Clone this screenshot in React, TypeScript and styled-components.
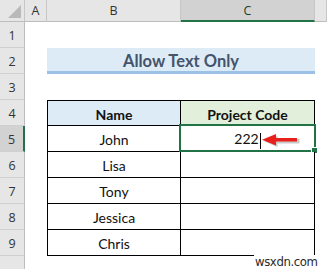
import React from "react";
import styled, {createGlobalStyle} from "styled-components";

const Global = createGlobalStyle`
  html, body {
    margin: 0;
    padding: 0;
    background: #ffffff;
  }
  body {
    font-family: "Lato", "Open Sans", sans-serif;
  }
`

const Sheet = styled.div`
  position: relative;
  width: 327px;
  height: 269px;
  overflow: hidden;
  display: grid;
  grid-template-columns: 25px 22px 134px 134px 12px;
  grid-template-rows: 22px repeat(10, 26px);
  background: #ffffff;
`

const Corner = styled.div`
  position: relative;
  background: #e6e6e6;
  border-right: 1px solid #c6c6c6;
  border-bottom: 1px solid #bdbdbd;
  box-sizing: border-box;

  &::after {
    content: "";
    position: absolute;
    right: 3px;
    bottom: 3px;
    width: 0;
    height: 0;
    border-left: 13px solid transparent;
    border-bottom: 13px solid #b9b9b9;
  }
`

const ColHead = styled.div<{ $active?: boolean }>`
  display: flex;
  align-items: center;
  justify-content: center;
  box-sizing: border-box;
  background: ${p => p.$active ? "#d2d2d2" : "#e6e6e6"};
  border-right: 1px solid #c6c6c6;
  border-bottom: ${p => p.$active ? "2px solid #217346" : "1px solid #bdbdbd"};
  padding-top: ${p => p.$active ? "1px" : "0"};
  font-family: "Open Sans", "Noto Sans", sans-serif;
  font-size: 12.5px;
  color: ${p => p.$active ? "#1f3d2b" : "#333333"};
`

const RowHead = styled.div<{ $active?: boolean }>`
  grid-column: 1;
  display: flex;
  align-items: center;
  justify-content: center;
  box-sizing: border-box;
  background: ${p => p.$active ? "#d2d2d2" : "#e6e6e6"};
  border-right: ${p => p.$active ? "2px solid #217346" : "1px solid #bdbdbd"};
  border-bottom: 1px solid #d0d0d0;
  padding-top: 2px;
  font-family: "Open Sans", "Noto Sans", sans-serif;
  font-size: 12.5px;
  color: #333333;
`

const Title = styled.div`
  grid-column: 3 / 5;
  grid-row: 3;
  display: flex;
  align-items: center;
  justify-content: center;
  box-sizing: border-box;
  background: #ddebf7;
  border-bottom: 3px solid #9bc2e6;
  padding-top: 2px;
  font-family: "Lato", "Open Sans", sans-serif;
  font-weight: 700;
  font-size: 16.5px;
  color: #44546a;
`

const Table = styled.div`
  grid-column: 3 / 5;
  grid-row: 5 / 11;
  display: grid;
  grid-template-columns: 134px 134px;
  grid-auto-rows: 26px;
  margin-left: 0;
  box-sizing: border-box;
`

const Cell = styled.div<{ $head?: "blue" | "green"; $first?: boolean; $col: number }>`
  position: relative;
  display: flex;
  align-items: center;
  justify-content: center;
  box-sizing: border-box;
  background: ${p => p.$head === "blue" ? "#ddebf7" : p.$head === "green" ? "#e2efda" : "#ffffff"};
  border-right: 1px solid #000000;
  border-bottom: 1px solid #000000;
  border-left: ${p => p.$col === 0 ? "1px solid #000000" : "none"};
  border-top: ${p => p.$first ? "1px solid #000000" : "none"};
  padding-top: 2px;
  font-family: "Lato", "Open Sans", sans-serif;
  font-weight: ${p => p.$head ? 700 : 400};
  font-size: 14px;
  color: #111111;
`

const Selection = styled.div`
  position: absolute;
  left: -2px;
  top: -2px;
  right: -2px;
  bottom: -1px;
  border: 2px solid #217346;
  pointer-events: none;

  &::after {
    content: "";
    position: absolute;
    right: -4px;
    bottom: -4px;
    width: 5px;
    height: 5px;
    background: #217346;
    border: 1px solid #ffffff;
  }
`

const Caret = styled.span`
  display: inline-block;
  width: 1px;
  height: 16px;
  margin-left: 1px;
  background: #000000;
  vertical-align: middle;
`

const Arrow = styled.svg`
  position: absolute;
  left: 80px;
  top: 7px;
`

const Watermark = styled.div`
  position: absolute;
  left: 254px;
  top: 255px;
  padding: 0 1px;
  background: #ffffff;
  font-family: "Liberation Sans Narrow", "DejaVu Sans Condensed", "Liberation Sans", sans-serif;
  font-size: 13px;
  line-height: 13px;
  letter-spacing: -0.4px;
  color: #2a2a2a;
`

const names = ["John", "Lisa", "Tony", "Jessica", "Chris"]

const App: React.FC = () => {
    return (
        <>
            <Global/>
            <Sheet>
                <Corner/>
                <ColHead>A</ColHead>
                <ColHead>B</ColHead>
                <ColHead $active>C</ColHead>
                <ColHead/>
                {Array.from({length: 10}, (_, i) => (
                    <RowHead key={i} $active={i === 4} style={{gridRow: i + 2}}>{i < 9 ? i + 1 : ""}</RowHead>
                ))}
                <Title>Allow Text Only</Title>
                <Table>
                    <Cell $head="blue" $first $col={0}>Name</Cell>
                    <Cell $head="green" $first $col={1}>Project Code</Cell>
                    {names.map((n, i) => (
                        <React.Fragment key={n}>
                            <Cell $col={0}>{n}</Cell>
                            <Cell $col={1}>
                                {i === 0 && (
                                    <>
                                        <span>222<Caret/></span>
                                        <Selection/>
                                        <Arrow width="40" height="14" viewBox="0 0 40 14">
                                            <path d="M14 4.5 H37 V9 H14 Z" fill="#c9c9c9" transform="translate(1.5 1.5)"/>
                                            <path d="M2 7 L15 1.5 L15 12.5 Z" fill="#c9c9c9" transform="translate(1.5 1.5)"/>
                                            <path d="M14 5 H36 V8.5 H14 Z" fill="#e8201c"/>
                                            <path d="M1 6.8 L15 1 L15 12.5 Z" fill="#e8201c"/>
                                        </Arrow>
                                    </>
                                )}
                            </Cell>
                        </React.Fragment>
                    ))}
                </Table>
                <Watermark>wsxdn.com</Watermark>
            </Sheet>
        </>
    )
}

export default App;
